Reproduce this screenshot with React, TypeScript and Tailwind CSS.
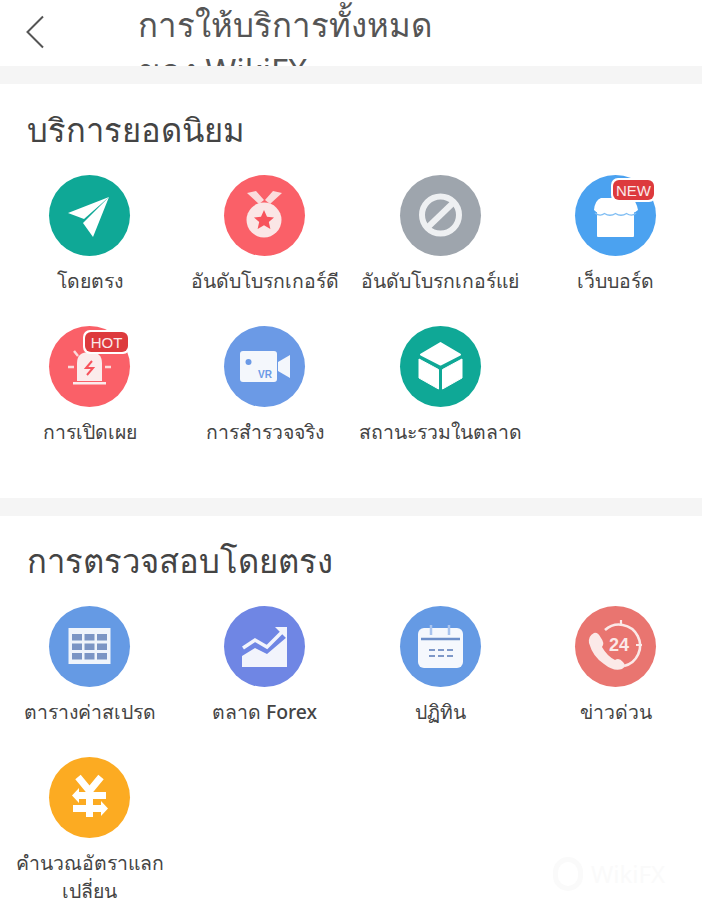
import type { ReactNode } from 'react';

const FONT = "font-['Noto_Sans','DejaVu_Sans','Liberation_Sans',sans-serif]";

function Circle({ color, children }: { color: string; children: ReactNode }) {
  return (
    <svg viewBox="0 0 81 81" className="w-[81px] h-[81px] block overflow-visible">
      <circle cx="40.5" cy="40.5" r="40.5" fill={color} />
      {children}
    </svg>
  );
}

function Badge({ x, y, w, text }: { x: number; y: number; w: number; text: string }) {
  return (
    <g>
      <rect x={x - 2} y={y - 2} width={w + 4} height="24" rx="7" fill="#fff" />
      <rect x={x} y={y} width={w} height="20" rx="6" fill="#dd3a3d" />
      <text x={x + w / 2} y={y + 15.5} textAnchor="middle" fontSize="15" fill="#fbe9e9" fontFamily="Liberation Sans, sans-serif">{text}</text>
    </g>
  );
}

const icons: Record<string, ReactNode> = {
  direct: (
    <Circle color="#0fa896">
      <path d="M19 38 L60 22 L35 44 Z" fill="#fff" />
      <path d="M60 22 L34 48 L44 62 Z" fill="#fff" />
    </Circle>
  ),
  medal: (
    <Circle color="#fa6068">
      <path d="M23 18 L32 16 L40 25 L35 29 Z M58 18 L49 16 L41 25 L46 29 Z" fill="#fbdcdc" />
      <circle cx="40" cy="45" r="17.5" fill="#fbe6e6" />
      <path d="M40 35 L43 41.8 L50 42.4 L44.8 47 L46.4 54 L40 50.2 L33.6 54 L35.2 47 L30 42.4 L37 41.8 Z" fill="#f7535c" />
    </Circle>
  ),
  ban: (
    <Circle color="#9ea5ad">
      <circle cx="40.5" cy="40" r="18.5" fill="none" stroke="#eef0f2" strokeWidth="6" />
      <path d="M27 53 L54 27" stroke="#eef0f2" strokeWidth="6" />
    </Circle>
  ),
  shop: (
    <Circle color="#4ba2f0">
      <rect x="22" y="34" width="37" height="28" rx="1" fill="#fff" />
      <path d="M26 23 H56 Q61 25 63 35 Q57 41 51.5 36 Q46 41 40.5 36 Q35 41 29.5 36 Q24 41 19 35 Q20 25 26 23 Z" fill="#fff" />
      <path d="M20 38 Q25 42 29.5 38.5 Q35 42 40.5 38.5 Q46 42 51.5 38.5 Q57 42 61 38" stroke="#7fbdf3" strokeWidth="1.4" fill="none" />
      <Badge x={38} y={5} w={41} text="NEW" />
    </Circle>
  ),
  alarm: (
    <Circle color="#fa6068">
      <path d="M28 55 V37 Q28 26 40.5 26 Q53 26 53 37 V55 Z" fill="#fbecec" />
      <rect x="24" y="56" width="33" height="2.5" fill="#fbecec" />
      <path d="M43 35 L37 42 L44 42 L38 49" stroke="#f7535c" strokeWidth="2" fill="none" />
      <path d="M19 41 H25 M56 41 H62 M25 25 L29 30" stroke="#fbdada" strokeWidth="2.5" />
      <Badge x={36} y={6} w={43} text="HOT" />
    </Circle>
  ),
  video: (
    <Circle color="#6b9ae6">
      <rect x="16" y="25" width="37" height="31" rx="3" fill="#f4f7fc" />
      <path d="M54 36 L66 29 V52 L54 45 Z" fill="#f4f7fc" />
      <circle cx="24.5" cy="36" r="3" fill="#6b9ae6" />
      <text x="41" y="52" textAnchor="middle" fontSize="10" fontWeight="700" fill="#6b9ae6" fontFamily="Liberation Sans, sans-serif">VR</text>
    </Circle>
  ),
  cube: (
    <Circle color="#0fa896">
      <path d="M40.5 17 L60 28.5 L40.5 38.5 L21 28.5 Z" fill="#fff" stroke="#fff" strokeWidth="2" strokeLinejoin="round" />
      <path d="M19 33 L38.5 43.5 V63 L19 52 Z" fill="#fff" stroke="#fff" strokeWidth="1" strokeLinejoin="round" />
      <path d="M62 33 L42.5 43.5 V63 L62 52 Z" fill="#fff" stroke="#fff" strokeWidth="1" strokeLinejoin="round" />
    </Circle>
  ),
  table: (
    <Circle color="#659ae4">
      <rect x="19.5" y="22" width="42" height="36" fill="#eff4fb" />
      {[0, 1, 2].map((r) =>
        [0, 1, 2].map((c) => (
          <rect key={`${r}-${c}`} x={23 + c * 12.5} y={28 + r * 9.5} width="10" height="6.5" fill="#7b95c4" />
        ))
      )}
    </Circle>
  ),
  chart: (
    <Circle color="#6f86e4">
      <path d="M18 61 V50 L31 42 L43 48 L63 31 V61 Z" fill="#f2f4fc" />
      <path d="M19 42 L31 34 L43 41 L59 25" stroke="#f2f4fc" strokeWidth="3.5" fill="none" />
      <path d="M51 21 H63 V33 Z" fill="#f2f4fc" />
    </Circle>
  ),
  calendar: (
    <Circle color="#659ae4">
      <rect x="18" y="22" width="45" height="40" rx="6" fill="#f5f8fd" />
      <path d="M21 33 H60" stroke="#6d8fc9" strokeWidth="2.5" />
      <path d="M31 19 V29 M49 19 V29" stroke="#a9c4ee" strokeWidth="2.5" />
      <path d="M29 44 H35 M38 44 H44 M47 44 H53 M29 50 H35 M38 50 H44 M47 50 H53" stroke="#7e98c8" strokeWidth="2.2" />
    </Circle>
  ),
  phone: (
    <Circle color="#e97570">
      <path d="M30 24 A21 21 0 1 1 49 60" stroke="#fbe9e8" strokeWidth="2.6" fill="none" />
      <path d="M46 14 V20 M67 39 H61 M26 38 H28" stroke="#fbe9e8" strokeWidth="2.2" />
      <path d="M19 27 Q13 30 14 37 Q18 51 29 58 Q39 66 47 63 Q52 60 48 56 Q44 51 40 54 Q32 50 27 41 Q30 37 26 32 Q23 26 19 27 Z" fill="#fbe9e8" />
      <text x="44" y="45" textAnchor="middle" fontSize="18" fontWeight="700" fill="#fbe9e8" fontFamily="Liberation Sans, sans-serif">24</text>
    </Circle>
  ),
  yen: (
    <Circle color="#fcab22">
      <path d="M29 20 L40.5 34 L52 20" stroke="#fff" strokeWidth="7" fill="none" />
      <path d="M40.5 32 V60" stroke="#fff" strokeWidth="7" />
      <path d="M27 35 H57 V42 H27 Z M24 48 H52 V55 H24 Z" fill="#fff" />
      <path d="M30 31 L23 38.5 L30 46 Z M52 44 L59 51.5 L52 59 Z" fill="#fff" />
    </Circle>
  ),
};

type Item = { icon: string; label: ReactNode };

const popular: Item[] = [
  { icon: 'direct', label: 'โดยตรง' },
  { icon: 'medal', label: 'อันดับโบรกเกอร์ดี' },
  { icon: 'ban', label: 'อันดับโบรกเกอร์แย่' },
  { icon: 'shop', label: 'เว็บบอร์ด' },
  { icon: 'alarm', label: 'การเปิดเผย' },
  { icon: 'video', label: 'การสำรวจจริง' },
  { icon: 'cube', label: 'สถานะรวมในตลาด' },
];

const inspection: Item[] = [
  { icon: 'table', label: 'ตารางค่าสเปรด' },
  { icon: 'chart', label: <>ตลาด <span className="font-medium">Forex</span></> },
  { icon: 'calendar', label: 'ปฏิทิน' },
  { icon: 'phone', label: 'ข่าวด่วน' },
  { icon: 'yen', label: 'คำนวณอัตราแลกเปลี่ยน' },
];

function Grid({ items }: { items: Item[] }) {
  return (
    <div className="grid grid-cols-[175px_175px_176px_175px] gap-y-[31px] pl-[2px]">
      {items.map((item) => (
        <div key={item.icon} className="flex flex-col items-center">
          {icons[item.icon]}
          <p className="mt-[11px] text-[19.4px] leading-[28px] text-[#444] text-center w-[170px]">
            {item.label}
          </p>
        </div>
      ))}
    </div>
  );
}

export default function App() {
  return (
    <div className={`relative w-[702px] h-[908px] overflow-hidden bg-white ${FONT}`}>
      <header className="h-[66px] overflow-hidden flex items-start">
        <svg viewBox="0 0 20 34" className="w-[20px] h-[34px] ml-[25px] mt-[15px] shrink-0">
          <path d="M18 1.5 L2.5 17 L18 32.5" fill="none" stroke="#555" strokeWidth="2" />
        </svg>
        <h1 className="ml-[93px] mt-[2px] w-[310px] text-[33px] leading-[46px] text-[#555]">
          การให้บริการทั้งหมดของ WikiFX
        </h1>
      </header>
      <div className="h-[18px] bg-[#f5f5f5]" />
      <section className="h-[414px]">
        <h2 className="pl-[27px] pt-[24px] text-[32.7px] leading-[44px] text-[#444]">บริการยอดนิยม</h2>
        <div className="mt-[23px]">
          <Grid items={popular} />
        </div>
      </section>
      <div className="h-[18px] bg-[#f5f5f5]" />
      <section>
        <h2 className="pl-[27px] pt-[23px] text-[32.8px] leading-[44px] text-[#444]">การตรวจสอบโดยตรง</h2>
        <div className="mt-[23px]">
          <Grid items={inspection} />
        </div>
      </section>
      <div className="absolute left-[553px] top-[857px] flex items-center gap-[8px]">
        <div className="w-[30px] h-[34px] rounded-full border-[5px] border-[#fafafa]" />
        <span className="text-[24px] leading-[30px] text-[#fafafa]">WikiFX</span>
      </div>
    </div>
  );
}
